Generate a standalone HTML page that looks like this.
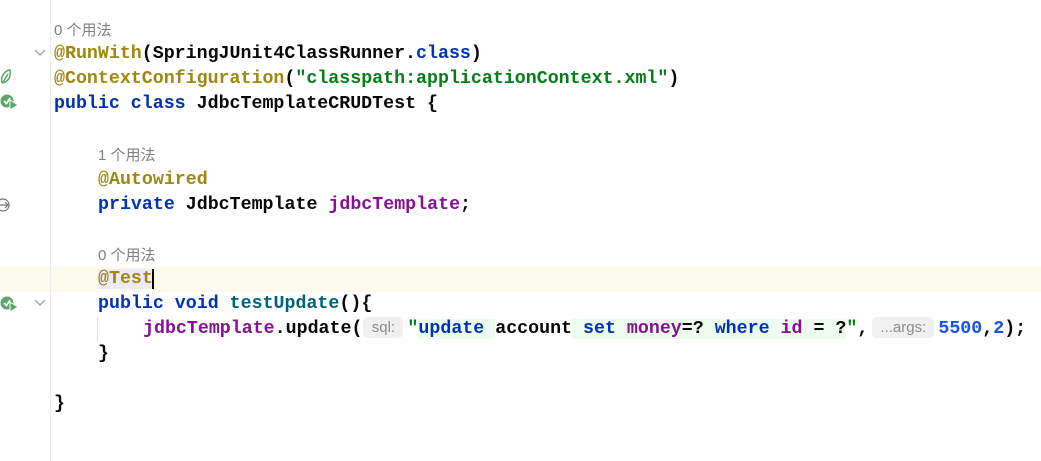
<!DOCTYPE html>
<html><head><meta charset="utf-8"><style>
body{margin:0;width:1041px;height:461px;background:#fff;position:relative;overflow:hidden;font-family:"Liberation Mono",monospace;font-size:18.3px;font-weight:bold;}
.gut{position:absolute;left:50px;top:0;width:1px;height:461px;background:#ebecf0;}
.cur{position:absolute;left:0;top:267px;width:1041px;height:25px;background:#fcfaed;}
.l{position:absolute;left:54px;height:25px;line-height:25px;white-space:pre;color:#080808;}
.h{font-family:"Liberation Sans","Noto Sans CJK SC",sans-serif;font-size:15px;color:#808080;font-weight:normal;}
.an{color:#9e880d}.kw{color:#0033b3}.st{color:#067d17}.fn{color:#00627a}.fd{color:#871094}.nm{color:#1750eb}
.hint{display:inline-block;box-sizing:border-box;text-align:center;font-family:"Liberation Sans",sans-serif;font-weight:normal;font-size:15px;color:#8c8c8c;background:#f0f0f0;border-radius:5px;line-height:21px;vertical-align:1px}
.g{background:#edfcee}
.icon{position:absolute;}
.fold{position:absolute;left:34px;}
</style></head><body>
<div class="cur"></div>
<div class="gut"></div>
<div class="l h" style="top:18px">0 个用法</div>
<div class="l" style="top:42px"><span class="an">@RunWith</span>(SpringJUnit4ClassRunner.<span class="kw">class</span>)</div>
<div class="l" style="top:67px"><span class="an">@ContextConfiguration</span>(<span class="st">"classpath:applicationContext.xml"</span>)</div>
<div class="l" style="top:92px"><span class="kw">public class</span> JdbcTemplateCRUDTest {</div>
<div class="l h" style="top:143px;left:98px">1 个用法</div>
<div class="l" style="top:168px;left:98px"><span class="an">@Autowired</span></div>
<div class="l" style="top:193px;left:98px"><span class="kw">private</span> JdbcTemplate <span class="fd">jdbcTemplate</span>;</div>
<div class="l h" style="top:243px;left:98px">0 个用法</div>
<div class="l" style="top:267px;left:98px"><span class="an" style="background:#edeafc">@Test</span><span style="border-left:2px solid #000;margin-left:-1px"></span></div>
<div class="l" style="top:292px;left:98px"><span class="kw">public void</span> <span class="fn">testUpdate</span>(){</div>
<div class="l" style="top:317px;left:143px"><span class="fd">jdbcTemplate</span>.update(<span class="hint" style="width:40px;margin:0 4px 0 1px">sql:</span><span class="st">"</span><span class="g"><span class="kw">update</span> </span>account<span class="g"> <span class="kw">set</span> <span class="fd">money</span>=? <span class="kw">where</span> <span class="fd">id</span> = ?</span><span class="st">"</span>,<span class="hint" style="width:62px;margin:0 4px 0 4px">...args:</span><span class="nm">5500</span>,<span class="nm">2</span>);</div>
<div style="position:absolute;left:97px;top:317px;width:1px;height:25px;background:#e0e0e0"></div>
<div class="l" style="top:342px;left:98px">}</div>
<div class="l" style="top:392px">}</div>
<svg class="fold" style="top:49px" width="12" height="8"><path d="M1 1 L6 6 L11 1" fill="none" stroke="#a0a0a0" stroke-width="1.3"/></svg>
<svg class="fold" style="top:299px" width="12" height="8"><path d="M1 1 L6 6 L11 1" fill="none" stroke="#a0a0a0" stroke-width="1.3"/></svg>
<svg class="icon" style="left:0;top:68px" width="12" height="18"><path d="M2 15 C0 8 6 2 10 2 C11 8 9 14 2 15 M3 14 L8 6" fill="none" stroke="#59a869" stroke-width="1.5"/></svg>
<svg class="icon" style="left:0;top:93px" width="20" height="18"><circle cx="7" cy="8" r="6.5" fill="#59a869"/><path d="M4 8 L6.5 10.5 L10 5" stroke="#fff" stroke-width="1.8" fill="none"/><path d="M10 7 L18 12 L10 17Z" fill="#59a869" stroke="#fff" stroke-width="1"/></svg>
<svg class="icon" style="left:0;top:295px" width="20" height="18"><circle cx="7" cy="8" r="6.5" fill="#59a869"/><path d="M4 8 L6.5 10.5 L10 5" stroke="#fff" stroke-width="1.8" fill="none"/><path d="M10 7 L18 12 L10 17Z" fill="#59a869" stroke="#fff" stroke-width="1"/></svg>
<svg class="icon" style="left:0;top:196px" width="12" height="18"><circle cx="3" cy="9" r="6" fill="none" stroke="#777" stroke-width="1.2"/><path d="M0 9 H8 M5 6 L8 9 L5 12" stroke="#777" stroke-width="1.2" fill="none"/></svg>
</body></html>
